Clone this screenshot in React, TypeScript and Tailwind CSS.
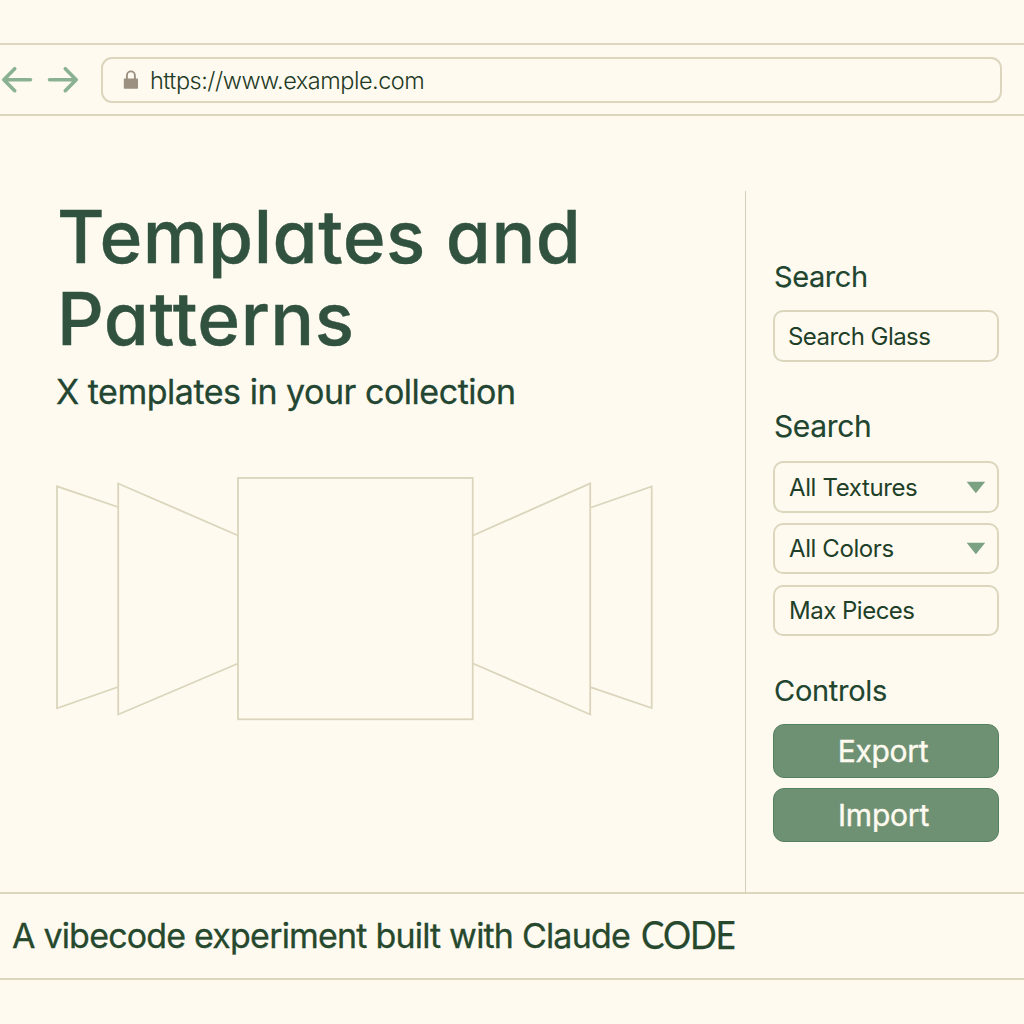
import React from "react";

const LINE = "border-[#dbd6bc]";

function Arrow({ flip = false }: { flip?: boolean }) {
  return (
    <svg
      width="32"
      height="28"
      viewBox="0 0 32 28"
      fill="none"
      stroke="#8ab192"
      strokeWidth="3.6"
      strokeLinecap="round"
      strokeLinejoin="round"
      className={flip ? "-scale-x-100" : ""}
    >
      <path d="M29.5 13.7H3M13.7 2.7L2.8 13.7l10.9 11" />
    </svg>
  );
}

function Lock() {
  return (
    <svg width="16" height="20" viewBox="0 0 16 20" fill="none">
      <path d="M3.9 10V5.4a4 4 0 0 1 8 0V10" stroke="#9c9080" strokeWidth="1.9" />
      <rect x=".8" y="8.6" width="14.2" height="10.2" rx=".8" fill="#9c9080" />
    </svg>
  );
}

function Caret() {
  return (
    <svg width="20" height="13" viewBox="0 0 20 13">
      <path d="M.6 .8h18.6L9.9 12.2z" fill="#7ba283" />
    </svg>
  );
}

function Field({ label, className, caret = false }: { label: React.ReactNode; className: string; caret?: boolean }) {
  return (
    <div
      className={`flex w-[226px] items-center justify-between rounded-[10px] border-2 ${LINE} pr-[11px] text-[24px] leading-none text-[#1f4028] ${className}`}
    >
      {label}
      {caret && <Caret />}
    </div>
  );
}

function Gallery() {
  return (
    <svg
      width="600"
      height="246"
      viewBox="54 476 600 246"
      fill="none"
      stroke="#dad5bb"
      strokeWidth="1.8"
      className="ml-[54px] mt-[64px] block"
    >
      <path d="M118 507L57 486.3V708.3L118 687" />
      <path d="M238 535.5L118.2 483.5V714.5L238 663.5" />
      <rect x="238" y="478" width="234.7" height="241.3" />
      <path d="M473 535.5L590.2 483.5V714.5L473 663.5" />
      <path d="M591 507.5L651.7 486.5V708L591 687.3" />
    </svg>
  );
}

export default function App() {
  return (
    <div className="flex h-[1024px] w-[1024px] flex-col overflow-hidden whitespace-nowrap bg-[#fefaf0] font-['Inter',sans-serif]">
      <header className={`mt-[43px] flex h-[73px] shrink-0 items-center border-y-2 ${LINE}`}>
        <div className="flex w-[101px] shrink-0 items-center gap-[14px] pl-px">
          <Arrow />
          <Arrow flip />
        </div>
        <div className={`flex h-[46px] w-[901px] items-center rounded-[11px] border-2 ${LINE} pl-5`}>
          <Lock />
          <span className="ml-[11px] pt-[2px] text-[23.5px] font-light leading-none tracking-[-0.48px] text-[#1f3a26]">
            https://www.example.com
          </span>
        </div>
      </header>

      <div className="flex h-[776px] shrink-0">
        <main className="flex w-[745px] shrink-0 flex-col">
          <h1 className="ml-[57px] mt-[80px] text-[73px] font-medium leading-[82px] tracking-[0.47px] text-[#31523f] [-webkit-text-stroke:0.4px_#31523f] [font-feature-settings:'cv11']">
            Templates and
            <br />
            Patterns
          </h1>
          <p className="ml-[56px] mt-[11px] h-[41px] text-[34px] leading-[41px] tracking-[-0.48px] text-[#234632] [-webkit-text-stroke:0.3px_#234632]">
            X templates in your collection
          </p>
          <Gallery />
        </main>

        <aside className="mt-[75px] flex grow flex-col border-l border-[#d3ceb6] pl-[27px]">
          <h2 className="ml-px mt-[68px] text-[29px] leading-[36px] tracking-[-0.42px] text-[#21452f] [-webkit-text-stroke:0.15px_#21452f]">
            Search
          </h2>
          <Field
            className="mt-[15px] h-[52px] pl-[13px] pt-[2px]"
            label={<span className="tracking-[-0.55px]">Search Glass</span>}
          />
          <h2 className="ml-px mt-[46px] text-[30px] leading-[36px] tracking-[-0.38px] text-[#21452f] [-webkit-text-stroke:0.15px_#21452f]">
            Search
          </h2>
          <Field
            caret
            className="mt-[17px] h-[52px] pl-[14px] pt-px"
            label={<span className="tracking-[-0.38px]">All Textures</span>}
          />
          <Field
            caret
            className="mt-[10px] h-[51px] pl-[14px]"
            label={<span className="tracking-[-0.4px]">All Colors</span>}
          />
          <Field
            className="mt-[11px] h-[51px] pl-[14px] pt-px"
            label={<span className="tracking-[-0.5px]">Max Pieces</span>}
          />
          <h2 className="ml-px mt-[37px] text-[29px] leading-[36px] tracking-[-0.28px] text-[#21452f] [-webkit-text-stroke:0.15px_#21452f]">
            Controls
          </h2>
          <button className="mt-[15px] h-[54px] w-[226px] rounded-[11px] border border-[#55805f] bg-[#6e9173] pr-[6px] text-[30px] leading-none tracking-[-0.3px] text-[#fefaf0] [-webkit-text-stroke:0.4px_#fefaf0]">
            Export
          </button>
          <button className="mt-[10px] h-[54px] w-[226px] rounded-[11px] border border-[#55805f] bg-[#6e9173] pr-[5px] text-[30px] leading-none tracking-[-0.2px] text-[#fefaf0] [-webkit-text-stroke:0.4px_#fefaf0]">
            Import
          </button>
        </aside>
      </div>

      <footer className={`flex h-[88px] shrink-0 items-center border-y-2 ${LINE} pl-[12px] text-[#26492e]`}>
        <span className="w-[629px] text-[34px] leading-none tracking-[-0.81px] [-webkit-text-stroke:0.3px_#26492e]">
          A vibecode experiment built with Claude
        </span>
        <span className="origin-left scale-x-[0.9] pb-[3px] font-['Lato',sans-serif] text-[39px] leading-none tracking-[-1.2px] [-webkit-text-stroke:0.25px_#26492e]">
          CODE
        </span>
      </footer>
    </div>
  );
}
